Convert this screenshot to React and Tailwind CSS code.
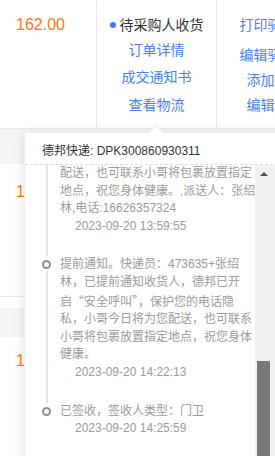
const cjk = "font-['Noto_Sans_CJK_SC',sans-serif]";

function Price({ top }) {
    return (
        <div className={`w-[97px] shrink-0 border-r border-[#e8e8e8] pl-4 ${top}`}>
            <p className="text-[16px] leading-[20px] text-[#ff7a14]">162.00</p>
        </div>
    )
}

function FirstRow() {
    return (
        <div className="flex h-[129px] border-b border-[#e8e8e8]">
            <Price top="pt-[15px]" />
            <div className="flex w-[120px] shrink-0 flex-col items-center border-r border-[#e8e8e8] pt-[15px] text-[14px] leading-[20px]">
                <p className="flex items-center text-[#333]">
                    <span className="mr-[4px] h-[6px] w-[6px] rounded-full bg-[#3d7cf5]"></span>
                    待采购人收货
                </p>
                <a className="mt-[5px] text-[#4a7ff2]">订单详情</a>
                <a className="mt-[7px] text-[#4a7ff2]">成交通知书</a>
                <a className="mt-[8px] text-[#4a7ff2]">查看物流</a>
            </div>
            <div className="flex w-[115px] shrink-0 flex-col items-center pt-[15px] text-[14px] leading-[20px] text-[#4a7ff2]">
                <a>打印驿站单</a>
                <a className="mt-[10px]">编辑驿站单</a>
                <a className="mt-[5px]">添加备注</a>
                <a className="mt-[5px]">编辑备注</a>
            </div>
        </div>
    )
}

function PlainRow({ top, height }) {
    return (
        <div className={`flex ${height} border-b border-[#e8e8e8]`}>
            <Price top={top} />
        </div>
    )
}

function Lines({ lines }) {
    return lines.map((l, i) => (
        <p key={i} className="whitespace-nowrap">{l}</p>
    ))
}

function TimelineItem({ lines, time, dot = true, tail = true }) {
    return (
        <div className="flex">
            <div className="flex w-[9px] shrink-0 flex-col items-center">
                {dot && <span className="mt-[4px] h-[9px] w-[9px] rounded-full border-2 border-[#8c8c8c] bg-white"></span>}
                {tail && <span className={`w-[2px] flex-1 bg-[#e6e6e6] ${dot ? "mt-[1px]" : ""}`}></span>}
            </div>
            <div className="ml-[9px] pb-[21px]">
                <Lines lines={lines} />
                <p className="pl-[15px]">{time}</p>
            </div>
        </div>
    )
}

function LogisticsPopover() {
    return (
        <div className="absolute left-[24px] top-[132px] h-[340px] w-[270px] border border-[#ebeef5] bg-white shadow-[0_2px_12px_rgba(0,0,0,0.12)]">
            <span className="absolute left-[126px] top-[-6px] h-[10px] w-[10px] rotate-45 border-l border-t border-[#ebeef5] bg-white"></span>
            <div className="h-[32px] border-b border-dashed border-[#dcdcdc] pl-[17px] pt-[10px] text-[12px] leading-[17px] text-[#333]">
                德邦快递: DPK300860930311
            </div>
            <div className="flex h-[300px]">
                <div className="w-[230px] shrink-0 pl-[17px] text-[12px] leading-[17.6px] text-[#9b9b9b]">
                    <TimelineItem
                        dot={false}
                        lines={["配送，也可联系小哥将包裹放置指定", "地点，祝您身体健康。,派送人：张绍", "林,电话:16626357324"]}
                        time="2023-09-20 13:59:55"
                    />
                    <TimelineItem
                        lines={[
                            "提前通知。快递员：473635+张绍",
                            "林，已提前通知收货人，德邦已开",
                            <>启<span className={cjk}>“</span>安全呼叫<span className={cjk}>”</span>，保护您的电话隐</>,
                            "私，小哥今日将为您配送，也可联系",
                            "小哥将包裹放置指定地点，祝您身体",
                            "健康。",
                        ]}
                        time="2023-09-20 14:22:13"
                    />
                    <TimelineItem tail={false} lines={["已签收，签收人类型：门卫"]} time="2023-09-20 14:25:59" />
                </div>
                <div className="flex w-[20px] flex-col bg-[#f1f1f1]">
                    <span className="ml-[5px] mt-[7px] h-0 w-0 border-x-[4px] border-b-[4px] border-x-transparent border-b-[#505050]"></span>
                    <span className="ml-[2px] mt-[185px] h-[120px] w-[13px] bg-[#787878]"></span>
                </div>
            </div>
        </div>
    )
}

export default function App() {
    return (
        <div className="relative h-[456px] w-[275px] overflow-hidden bg-white font-['Liberation_Sans','Noto_Sans_CJK_SC',sans-serif]">
            <FirstRow />
            <div className="h-[35px] bg-[#f5f5f5]"></div>
            <PlainRow top="pt-[18px]" height="h-[133px]" />
            <div className="h-[11px]"></div>
            <div className="h-[29px] bg-[#f5f5f5]"></div>
            <PlainRow top="pt-[14px]" height="h-[120px]" />
            <LogisticsPopover />
        </div>
    )
}
